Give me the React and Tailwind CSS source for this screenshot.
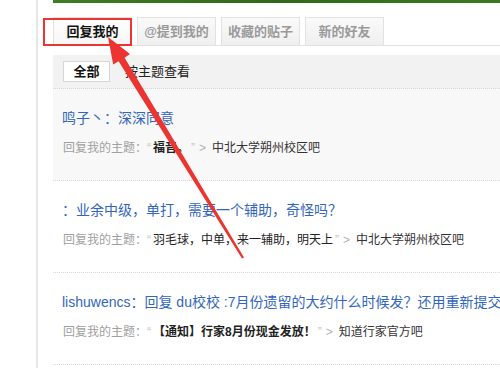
import React from 'react';

const tabs = [
  { label: '回复我的', active: true },
  { label: '@提到我的' },
  { label: '收藏的贴子' },
  { label: '新的好友' },
];

const items = [
  {
    title: '鸣子丶：深深同意',
    quote: '福音。',
    bold: true,
    forum: '中北大学朔州校区吧',
    bg: 'bg-[#f8f8f8]',
  },
  {
    title: '：业余中级，单打，需要一个辅助，奇怪吗？',
    quote: '羽毛球，中单，来一辅助，明天上',
    bold: false,
    forum: '中北大学朔州校区吧',
    bg: 'bg-white',
  },
  {
    title: 'lishuwencs：回复 du校校 :7月份遗留的大约什么时候发？还用重新提交银行卡吗',
    quote: '【通知】行家8月份现金发放！',
    bold: true,
    forum: '知道行家官方吧',
    bg: 'bg-white',
  },
];

const ReplyItem = ({ item }) => (
  <div className={`h-[92px] border-b border-dotted border-[#d8d8d8] pl-[9px] pt-[19px] ${item.bg}`}>
    <div className="h-[20px] overflow-hidden whitespace-nowrap text-[14px] leading-[20px] text-[#3366bb]">
      {item.title}
    </div>
    <div className="mt-[11px] flex h-[18px] items-center whitespace-nowrap pl-px text-[12px] leading-[18px]">
      <span className="text-[#a0a0a0]">回复我的主题：</span>
      <span className="font-['Liberation_Sans',sans-serif] text-[#c4c4c4]">“</span>
      <span className={`px-[2px] text-[#222] ${item.bold ? 'font-bold' : ''}`}>{item.quote}</span>
      <span className="font-['Liberation_Sans',sans-serif] text-[#c4c4c4]">”</span>
      <span className="px-[4px] font-['Liberation_Sans',sans-serif] text-[#b0b0b0]">&gt;</span>
      <span className="pl-[2px] text-[#333]">{item.forum}</span>
    </div>
  </div>
);

const Arrow = () => (
  <svg className="pointer-events-none absolute inset-0" width="500" height="368" viewBox="0 0 500 368">
    <polygon
      points="108,37 130,54 124.6,57.8 244,257.5 242,258.6 118.6,61.2 113.2,64.5"
      fill="#ec3430"
    />
  </svg>
);

export default function App() {
  return (
    <div className="relative flex h-[368px] w-[500px] overflow-hidden bg-white font-['Liberation_Sans','Noto_Sans_CJK_SC',sans-serif]">
      <div className="w-[36px] shrink-0" />
      <div className="w-[2px] shrink-0 bg-[#e4e9e3]" />
      <div className="w-[15px] shrink-0" />
      <div className="flex min-w-0 flex-1 flex-col">
        <div className="h-[3px] bg-gradient-to-r from-[#3f7d22] via-[#2f6a1a] to-[#3a7a20]" />
        <div className="mt-[14px] flex h-[29px] gap-[5px] border-b border-[#e2e2e2]">
          {tabs.map((t) => (
            <div
              key={t.label}
              className={`flex h-[28px] w-[79px] items-center justify-center border border-b-0 border-[#e2e2e2] text-[13px] font-bold ${
                t.active
                  ? 'bg-gradient-to-b from-white to-[#f6f6f6] text-[#111]'
                  : 'bg-gradient-to-b from-[#fafafa] to-[#efefef] text-[#9a9a9a]'
              }`}
            >
              {t.label}
            </div>
          ))}
        </div>
        <div className="mt-[9px] flex h-[34px] items-center gap-[15px] border-b border-dotted border-[#d8d8d8] bg-[#f2f2f2] pl-[10px]">
          <div className="flex h-[21px] w-[47px] items-center justify-center border border-[#d6d6d6] bg-white text-[13px] font-bold text-[#111]">
            全部
          </div>
          <span className="text-[13px] text-[#222]">按主题查看</span>
        </div>
        {items.map((item, i) => (
          <ReplyItem key={i} item={item} />
        ))}
      </div>
      <div className="pointer-events-none absolute left-[43px] top-[18px] h-[28px] w-[89px] border-2 border-[#ec3430]" />
      <Arrow />
    </div>
  );
}
